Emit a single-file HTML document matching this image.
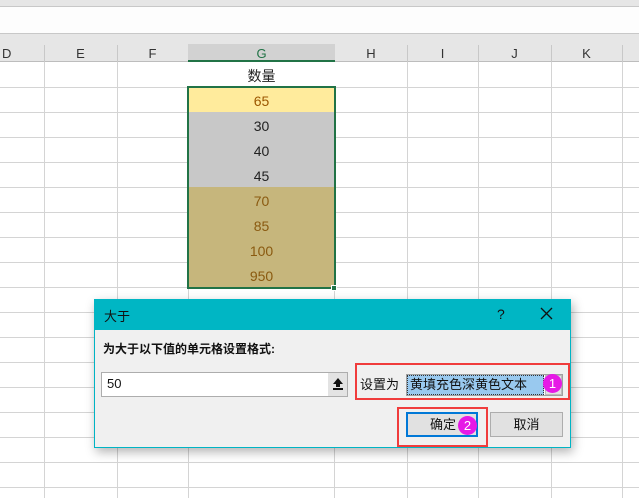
<!DOCTYPE html>
<html><head><meta charset="utf-8"><style>
*{margin:0;padding:0;box-sizing:border-box}
body{width:639px;height:498px;overflow:hidden;background:#fff;position:relative;font-family:"Liberation Sans","Noto Sans CJK SC",sans-serif}
.a{position:absolute}
.vl{position:absolute;width:1px;background:#d4d4d4;top:62px;height:436px}
.hl{position:absolute;height:1px;background:#d4d4d4;left:0;width:639px}
.ch{position:absolute;top:44px;height:18px;font-size:13px;color:#333;text-align:center;line-height:19px}
.c{position:absolute;left:188px;width:147px;height:25px;text-align:center;font-size:14px;line-height:29px}
</style></head><body>
<div class="a" style="left:0;top:0;width:639px;height:7px;background:#e6e6e6;border-bottom:1px solid #c8c8c8"></div>
<div class="a" style="left:0;top:7px;width:639px;height:26px;background:#fdfdfd"></div>
<div class="a" style="left:0;top:33px;width:639px;height:29px;background:#e6e6e6;border-top:1px solid #c8c8c8;border-bottom:1px solid #bdbdbd"></div>
<div class="a" style="left:188px;top:44px;width:147px;height:18px;background:#d2d2d2;border-bottom:2px solid #217346"></div>
<div class="ch" style="left:0;width:44px;text-align:left;padding-left:2px">D</div>
<div class="ch" style="left:44px;width:73px">E</div>
<div class="ch" style="left:117px;width:71px">F</div>
<div class="ch" style="left:188px;width:147px;color:#217346">G</div>
<div class="ch" style="left:335px;width:72px">H</div>
<div class="ch" style="left:407px;width:71px">I</div>
<div class="ch" style="left:478px;width:73px">J</div>
<div class="ch" style="left:551px;width:71px">K</div>
<div class="a" style="left:44px;top:45px;width:1px;height:17px;background:#c8c8c8"></div>
<div class="a" style="left:117px;top:45px;width:1px;height:17px;background:#c8c8c8"></div>
<div class="a" style="left:407px;top:45px;width:1px;height:17px;background:#c8c8c8"></div>
<div class="a" style="left:478px;top:45px;width:1px;height:17px;background:#c8c8c8"></div>
<div class="a" style="left:551px;top:45px;width:1px;height:17px;background:#c8c8c8"></div>
<div class="a" style="left:622px;top:45px;width:1px;height:17px;background:#c8c8c8"></div>
<div class="vl" style="left:44px"></div><div class="vl" style="left:117px"></div><div class="vl" style="left:188px"></div><div class="vl" style="left:334px"></div><div class="vl" style="left:407px"></div><div class="vl" style="left:478px"></div><div class="vl" style="left:551px"></div><div class="vl" style="left:622px"></div>
<div class="hl" style="top:87px"></div><div class="hl" style="top:112px"></div><div class="hl" style="top:137px"></div><div class="hl" style="top:162px"></div><div class="hl" style="top:187px"></div><div class="hl" style="top:212px"></div><div class="hl" style="top:237px"></div><div class="hl" style="top:262px"></div><div class="hl" style="top:287px"></div><div class="hl" style="top:312px"></div><div class="hl" style="top:337px"></div><div class="hl" style="top:362px"></div><div class="hl" style="top:387px"></div><div class="hl" style="top:412px"></div><div class="hl" style="top:437px"></div><div class="hl" style="top:462px"></div><div class="hl" style="top:487px"></div>
<div class="c" style="top:62px;background:#fff;color:#222">数量</div>
<div class="c" style="top:87px;background:#ffeb9c;color:#9c5700">65</div>
<div class="c" style="top:112px;background:#c8c8c8;color:#222">30</div>
<div class="c" style="top:137px;background:#c8c8c8;color:#222">40</div>
<div class="c" style="top:162px;background:#c8c8c8;color:#222">45</div>
<div class="c" style="top:187px;background:#c6b67c;color:#8a5a10">70</div>
<div class="c" style="top:212px;background:#c6b67c;color:#8a5a10">85</div>
<div class="c" style="top:237px;background:#c6b67c;color:#8a5a10">100</div>
<div class="c" style="top:262px;background:#c6b67c;color:#8a5a10">950</div>
<div class="a" style="left:187px;top:86px;width:149px;height:203px;border:2px solid #217346"></div>
<div class="a" style="left:331px;top:285px;width:6px;height:6px;background:#217346;border:1px solid #fff"></div>
<!-- dialog -->
<div class="a" style="left:94px;top:299px;width:477px;height:149px;background:#f0f0f0;border:1px solid #00b4c4;box-shadow:2px 4px 10px rgba(0,0,0,.3)"></div>
<div class="a" style="left:94px;top:299px;width:477px;height:31px;background:#00b6c4"></div>
<div class="a" style="left:104px;top:306px;font-size:13px;color:#111">大于</div>
<div class="a" style="left:497px;top:306px;font-size:14px;color:#111">?</div>
<svg class="a" style="left:540px;top:307px" width="13" height="13"><path d="M1 1L12 12M12 1L1 12" stroke="#111" stroke-width="1.3"/></svg>
<div class="a" style="left:103px;top:340px;font-size:12px;font-weight:bold;color:#111">为大于以下值的单元格设置格式:</div>
<div class="a" style="left:101px;top:372px;width:247px;height:25px;background:#fff;border:1px solid #adadad"></div>
<div class="a" style="left:107px;top:376px;font-size:13px;color:#111">50</div>
<div class="a" style="left:328px;top:373px;width:19px;height:23px;background:#e3e3e3"></div>
<svg class="a" style="left:332px;top:377px" width="12" height="14"><path d="M6 1L1 7H4V10H8V7H11Z" fill="#111"/><rect x="1" y="11" width="10" height="2" fill="#111"/></svg>
<div class="a" style="left:355px;top:363px;width:215px;height:37px;border:2px solid #f03c3c"></div>
<div class="a" style="left:360px;top:374px;font-size:13px;color:#111">设置为</div>
<div class="a" style="left:406px;top:374px;width:157px;height:22px;background:#fff;border:1px solid #a0a0a0"></div>
<div class="a" style="left:407px;top:375px;width:137px;height:20px;background:#99c9ef;border:1px dotted #333;font-size:13px;line-height:18px;padding-left:2px;color:#111">黄填充色深黄色文本</div>
<div class="a" style="left:545px;top:375px;width:17px;height:20px;background:#e3e3e3;border:1px solid #bbb"></div>
<div class="a" style="left:543px;top:374px;width:19px;height:19px;border-radius:50%;background:#e619e6;color:#fff;font-size:13px;text-align:center;line-height:19px">1</div>
<div class="a" style="left:397px;top:407px;width:91px;height:40px;border:2px solid #f03c3c"></div>
<div class="a" style="left:406px;top:412px;width:72px;height:25px;background:#e1e1e1;border:2px solid #0078d7;font-size:13px;line-height:21px;padding-left:22px;color:#111">确定</div>
<div class="a" style="left:458px;top:416px;width:19px;height:19px;border-radius:50%;background:#e619e6;color:#fff;font-size:13px;text-align:center;line-height:19px">2</div>
<div class="a" style="left:490px;top:412px;width:73px;height:25px;background:#e1e1e1;border:1px solid #adadad;font-size:13px;line-height:23px;text-align:center;color:#111">取消</div>
</body></html>
